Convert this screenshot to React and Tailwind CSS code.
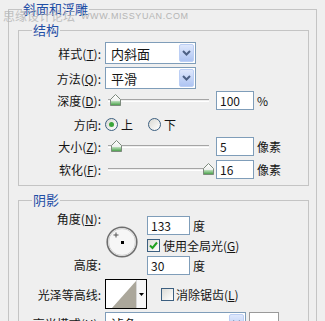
import React from 'react';

// Photoshop 图层样式 -「斜面和浮雕」面板 (XP 风格)

const lbl = "w-[82px] shrink-0 text-right";

function Select({ value, className }) {
  return (
    <div className={`flex items-center h-[22px] border border-[#7f9db9] bg-white ${className}`}>
      <span className="pl-[5px] text-[13px]">{value}</span>
      <div className="ml-auto mr-[1px] w-[15px] h-[18px] rounded-[2px] border border-[#bccff5] bg-linear-to-b from-[#dfe8fc] to-[#aec4f2] flex items-center justify-center">
        <svg width="9" height="6" viewBox="0 0 9 6">
          <path d="M1 1 L4.5 4.5 L8 1" stroke="#4d6185" strokeWidth="2" fill="none" />
        </svg>
      </div>
    </div>
  );
}

function Thumb() {
  return (
    <svg width="11" height="12" viewBox="0 0 11 12">
      <defs>
        <linearGradient id="thumbFill" x1="0" y1="0" x2="0" y2="1">
          <stop offset="0" stopColor="#ffffff" />
          <stop offset="0.55" stopColor="#eef0ee" />
          <stop offset="0.62" stopColor="#b6dcb6" />
          <stop offset="1" stopColor="#3f9b3f" />
        </linearGradient>
      </defs>
      <path d="M0.5 5.5 L5.5 0.5 L10.5 5.5 V11.5 H0.5 Z" fill="url(#thumbFill)" stroke="#7d8a7d" />
    </svg>
  );
}

function Slider({ thumbClass }) {
  return (
    <div className="relative ml-[4px] w-[107px] h-full flex items-center">
      <div className="mx-[3px] flex-1 h-[3px] border-t border-[#a5a5a5] border-b border-b-white" />
      <div className={`absolute top-[3px] ${thumbClass}`}>
        <Thumb />
      </div>
    </div>
  );
}

function Field({ value, className }) {
  return (
    <div className={`h-[19px] border border-[#7f9db9] bg-white pl-[3px] leading-[17px] ${className}`}>
      {value}
    </div>
  );
}

function Radio({ checked }) {
  return (
    <div className="w-[13px] h-[13px] rounded-full border border-[#3c5f80] bg-linear-to-br from-[#d9d9d3] to-white flex items-center justify-center">
      {checked && <div className="w-[5px] h-[5px] rounded-full bg-[#3aa53a]" />}
    </div>
  );
}

function Check({ checked }) {
  return (
    <div className="w-[13px] h-[13px] shrink-0 border border-[#3c5f80] bg-linear-to-br from-[#dcdcd7] to-white flex items-center justify-center">
      {checked && (
        <svg width="9" height="9" viewBox="0 0 9 9">
          <path d="M1 4.5 L3.5 7 L8 1.5" stroke="#21a121" strokeWidth="2" fill="none" />
        </svg>
      )}
    </div>
  );
}

function Group({ title, className, children }) {
  return (
    <div className={`relative border border-[#c4c4c4] ${className}`}>
      <span className="absolute left-[13px] -top-[9px] px-[1px] bg-[#efefef] text-[13px] leading-[16px] text-[#1f4ea6]">
        {title}
      </span>
      {children}
    </div>
  );
}

export default function App() {
  return (
    <div className="relative w-[325px] h-[321px] overflow-hidden bg-[#efefef] font-['Noto_Sans_CJK_SC','Noto_Sans',sans-serif] text-[12px] leading-[17px] text-[#151515]">
      <Group title="斜面和浮雕" className="ml-[8px] mt-[9px] w-[309px] h-[340px]">
        {/* 结构 */}
        <Group title="结构" className="ml-[9px] mt-[20px] w-[291px] h-[156px]">
          <div className="pt-[11px]">
            <div className="flex items-center h-[22px]">
              <div className={lbl}>样式(<u>T</u>):</div>
              <Select value="内斜面" className="ml-[4px] w-[91px]" />
            </div>
            <div className="flex items-center h-[22px] mt-[3px]">
              <div className={lbl}>方法(<u>Q</u>):</div>
              <Select value="平滑" className="ml-[4px] w-[91px]" />
            </div>
            <div className="flex items-center h-[19px] mt-[2px]">
              <div className={lbl}>深度(<u>D</u>):</div>
              <Slider thumbClass="left-[5px]" />
              <Field value="100" className="ml-[4px] w-[38px]" />
              <span className="ml-[3px]">%</span>
            </div>
            <div className="flex items-center h-[18px] mt-[5px]">
              <div className={lbl}>方向:</div>
              <div className="ml-[4px]"><Radio checked /></div>
              <span className="ml-[3px]">上</span>
              <div className="ml-[15px]"><Radio /></div>
              <span className="ml-[3px]">下</span>
            </div>
            <div className="flex items-center h-[19px] mt-[4px]">
              <div className={lbl}>大小(<u>Z</u>):</div>
              <Slider thumbClass="left-[6px]" />
              <Field value="5" className="ml-[4px] w-[38px]" />
              <span className="ml-[3px]">像素</span>
            </div>
            <div className="flex items-center h-[19px] mt-[4px]">
              <div className={lbl}>软化(<u>F</u>):</div>
              <Slider thumbClass="left-[98px]" />
              <Field value="16" className="ml-[4px] w-[38px]" />
              <span className="ml-[3px]">像素</span>
            </div>
          </div>
        </Group>

        {/* 阴影 */}
        <Group title="阴影" className="ml-[9px] mt-[14px] w-[291px] h-[200px]">
          <div className="flex items-start">
            <div className={`${lbl} flex flex-col`}>
              <div className="mt-[9px]">角度(<u>N</u>):</div>
              <div className="mt-[29px]">高度:</div>
            </div>
            <div className="ml-[5px] mt-[25px]">
              <svg width="32" height="32" viewBox="0 0 32 32">
                <circle cx="16" cy="16" r="14.8" fill="#f6f6f6" stroke="#6e6e6e" strokeWidth="1.6" />
                <circle cx="16" cy="16" r="13.4" fill="none" stroke="#d2d2d2" strokeWidth="1" />
                <path d="M10 6.5 V11.5 M7.5 9 H12.5" stroke="#555" strokeWidth="1" />
                <rect x="15" y="15" width="3" height="3" fill="#000" />
              </svg>
            </div>
            <div className="ml-[9px] mt-[15px] flex flex-col">
              <div className="flex items-center h-[19px]">
                <Field value="133" className="w-[43px]" />
                <span className="ml-[3px]">度</span>
              </div>
              <div className="flex items-center h-[15px] mt-[3px]">
                <Check checked />
                <span className="ml-[3px]">使用全局光(<u>G</u>)</span>
              </div>
              <div className="flex items-center h-[19px] mt-[3px]">
                <Field value="30" className="w-[43px]" />
                <span className="ml-[3px]">度</span>
              </div>
            </div>
          </div>

          <div className="flex items-center h-[30px] mt-[4px]">
            <div className={lbl}>光泽等高线:</div>
            <div className="ml-[4px] flex w-[42px] h-[30px] border border-black bg-white">
              <svg width="30" height="28" viewBox="0 0 30 28">
                <polygon points="6,28 30,1 30,28" fill="#aba79b" />
              </svg>
              <div className="flex-1 flex items-center justify-center border-l border-[#d6d6d6] bg-[#f7f7f7]">
                <svg width="5" height="3" viewBox="0 0 5 3">
                  <polygon points="0,0 5,0 2.5,3" fill="#000" />
                </svg>
              </div>
            </div>
            <div className="ml-[14px]"><Check /></div>
            <span className="ml-[2px]">消除锯齿(<u>L</u>)</span>
          </div>

          <div className="flex items-center h-[22px] mt-[3px]">
            <div className={lbl}>高光模式(<u>H</u>):</div>
            <Select value="滤色" className="ml-[4px] w-[141px]" />
            <div className="ml-[3px] w-[30px] h-[22px] border border-[#9a9a9a] bg-white" />
          </div>
        </Group>
      </Group>

      {/* 水印 */}
      <div className="absolute left-[3px] top-[9px] flex items-center gap-[6px] text-[#b5b5b5] pointer-events-none">
        <span className="text-[12px] leading-[14px] opacity-80">思缘设计论坛</span>
        <span className="font-['Liberation_Sans',sans-serif] text-[9px] leading-[12px] tracking-[0.6px]">WWW.MISSYUAN.COM</span>
      </div>
    </div>
  );
}
